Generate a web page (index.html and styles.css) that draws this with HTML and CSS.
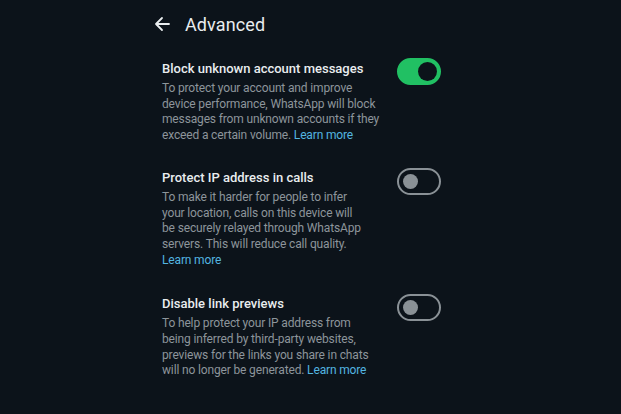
FILE: index.html
```html
<!DOCTYPE html>
<html lang="en">
<head>
    <meta charset="UTF-8">
    <meta name="viewport" content="width=device-width, initial-scale=1.0">
    <title>Advanced</title>
    <link rel="stylesheet" href="styles.css">
</head>
<body>
    <div class="screen">
        <header class="app-bar">
            <svg class="back-icon" width="16" height="16" viewBox="0 0 16 16">
                <path d="M15 8H2M8 2L2 8l6 6" fill="none" stroke="#e9edef" stroke-width="1.8" stroke-linecap="round" stroke-linejoin="round"/>
            </svg>
            <h1>Advanced</h1>
        </header>

        <div class="setting">
            <div class="setting-text">
                <div class="setting-title">Block unknown account messages</div>
                <div class="setting-desc">To protect your account and improve<br>device performance, WhatsApp will block<br>messages from unknown accounts if they<br>exceed a certain volume. <span class="learn-more">Learn more</span></div>
            </div>
            <div class="toggle on"><span class="knob"></span></div>
        </div>

        <div class="setting">
            <div class="setting-text">
                <div class="setting-title">Protect IP address in calls</div>
                <div class="setting-desc">To make it harder for people to infer<br>your location, calls on this device will<br>be securely relayed through WhatsApp<br>servers. This will reduce call quality.<br><span class="learn-more">Learn more</span></div>
            </div>
            <div class="toggle"><span class="knob"></span></div>
        </div>

        <div class="setting">
            <div class="setting-text">
                <div class="setting-title">Disable link previews</div>
                <div class="setting-desc">To help protect your IP address from<br>being inferred by third-party websites,<br>previews for the links you share in chats<br>will no longer be generated. <span class="learn-more">Learn more</span></div>
            </div>
            <div class="toggle"><span class="knob"></span></div>
        </div>
    </div>
</body>
</html>
```

FILE: styles.css
```css
body {
    margin: 0;
    background: #0c131a;
    font-family: Roboto, "Noto Sans", sans-serif;
    color: #e9edef;
    height: 414px;
    overflow: hidden;
}

.screen {
    width: 282px;
    margin-left: 154px;
    padding-top: 14px;
}

.app-bar {
    display: flex;
    align-items: center;
    gap: 15px;
    height: 20px;
    margin-bottom: 26px;
}

.back-icon {
    display: block;
}

h1 {
    margin: 0;
    font-size: 18px;
    font-weight: 400;
    letter-spacing: 0.1px;
}

.setting {
    display: flex;
    justify-content: space-between;
    align-items: flex-start;
    padding-left: 8px;
    margin-bottom: 25px;
}

.setting + .setting + .setting {
    padding-top: 2px;
}

.setting-title {
    font-size: 13px;
    font-weight: 500;
    line-height: 18px;
    margin-bottom: 3px;
}

.setting-desc {
    font-size: 12px;
    line-height: 15.7px;
    letter-spacing: -0.15px;
    color: #8d959b;
}

.learn-more {
    color: #53b5e0;
}

.toggle {
    flex: none;
    width: 44px;
    height: 27px;
    box-sizing: border-box;
    border-radius: 14px;
    border: 2px solid #8a9196;
    display: flex;
    align-items: center;
    padding: 0 4px;
    margin-top: -1px;
    margin-right: -5px;
}

.toggle .knob {
    width: 15px;
    height: 15px;
    border-radius: 50%;
    background: #8a9196;
}

.toggle.on {
    background: #21c063;
    border-color: #21c063;
    justify-content: flex-end;
    padding: 0 2px;
    margin-top: -2px;
}

.toggle.on .knob {
    width: 19px;
    height: 19px;
    background: #0c131a;
}
```
